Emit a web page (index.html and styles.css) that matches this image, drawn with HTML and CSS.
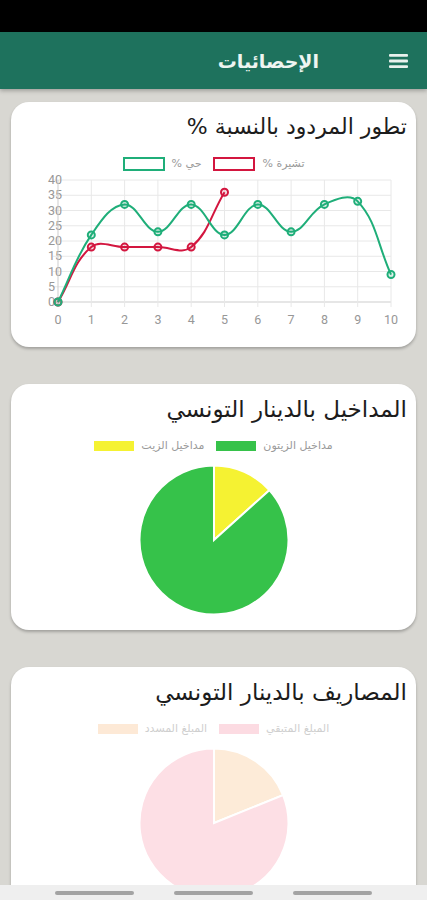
FILE: index.html
```html
<!DOCTYPE html>
<html lang="ar" dir="rtl">
<head>
  <meta charset="UTF-8" />
  <meta name="viewport" content="width=device-width, initial-scale=1.0"/>
  <title>الإحصائيات</title>
  <link rel="stylesheet" href="styles.css">
</head>
<body>
  <div class="app">
    <div class="status-bar"></div>
    <header class="app-bar">
      <button class="menu-btn" aria-label="menu">
        <svg width="19" height="14" viewBox="0 0 19 14">
          <rect x="0" y="0" width="19" height="2.8" rx="1"/>
          <rect x="0" y="5.6" width="19" height="2.8" rx="1"/>
          <rect x="0" y="11.2" width="19" height="2.8" rx="1"/>
        </svg>
      </button>
      <h1>الإحصائيات</h1>
    </header>

    <main class="content">
      <section class="card">
        <h2>تطور المردود بالنسبة %</h2>
        <div class="legend">
          <span class="legend-item"><i class="box box-line green"></i><span class="legend-label">حي %</span></span>
          <span class="legend-item"><i class="box box-line red"></i><span class="legend-label">تشيرة %</span></span>
        </div>
        <svg id="lineChart" class="line-chart" width="387" height="165" viewBox="0 0 387 165"></svg>
      </section>

      <section class="card">
        <h2>المداخيل بالدينار التونسي</h2>
        <div class="legend">
          <span class="legend-item"><i class="box yellow"></i><span class="legend-label">مداخيل الزيت</span></span>
          <span class="legend-item"><i class="box olive"></i><span class="legend-label">مداخيل الزيتون</span></span>
        </div>
        <svg class="pie" width="150" height="150" viewBox="0 0 150 150">
          <path d="M75 75 L75 0.5 A74.5 74.5 0 0 1 130.36 25.15 Z" fill="#f5f232" stroke="#fff" stroke-width="2"/>
          <path d="M75 75 L130.36 25.15 A74.5 74.5 0 1 1 75 0.5 Z" fill="#36c24a" stroke="#fff" stroke-width="2"/>
        </svg>
      </section>

      <section class="card">
        <h2>المصاريف بالدينار التونسي</h2>
        <div class="legend faded">
          <span class="legend-item"><i class="box peach"></i><span class="legend-label">المبلغ المسدد</span></span>
          <span class="legend-item"><i class="box pink"></i><span class="legend-label">المبلغ المتبقي</span></span>
        </div>
        <svg class="pie" width="150" height="150" viewBox="0 0 150 150">
          <path d="M75 75 L75 0.5 A74.5 74.5 0 0 1 144.07 47.09 Z" fill="#fdebd8" stroke="#fff" stroke-width="2"/>
          <path d="M75 75 L144.07 47.09 A74.5 74.5 0 1 1 75 0.5 Z" fill="#fddfe5" stroke="#fff" stroke-width="2"/>
        </svg>
      </section>
    </main>

    <div class="nav-bar">
      <span></span><span></span><span></span>
    </div>
  </div>

  <script src="script.js"></script>
</body>
</html>
```

FILE: styles.css
```css
* {
  box-sizing: border-box;
}

body {
  margin: 0;
  background: #d8d7d2;
  font-family: 'DejaVu Sans', sans-serif;
}

.app {
  height: 100vh;
  display: flex;
  flex-direction: column;
  overflow: hidden;
}

.status-bar {
  height: 32px;
  flex-shrink: 0;
  background: #000;
}

.app-bar {
  height: 57px;
  flex-shrink: 0;
  display: flex;
  align-items: center;
  padding-right: 19px;
  background: #1e725d;
  box-shadow: 0 2px 4px rgba(0, 0, 0, 0.25);
  position: relative;
  z-index: 1;
}

.menu-btn {
  display: flex;
  padding: 0;
  border: none;
  background: none;
  fill: #e9f1ed;
}

.app-bar h1 {
  margin: 0 70px 0 0;
  font-size: 19px;
  font-weight: bold;
  color: #eef5f1;
}

.content {
  flex: 1;
  overflow: hidden;
  display: flex;
  flex-direction: column;
  gap: 37px;
  padding: 13px 11px 0;
}

.card {
  flex-shrink: 0;
  padding: 8px 9px 11px;
  background: #fff;
  border-radius: 18px;
  box-shadow: 0 2px 3px rgba(0, 0, 0, 0.25);
}

.card h2 {
  margin: 0;
  font-size: 23px;
  font-weight: normal;
  line-height: 34px;
  color: #1c1c1c;
}

.card:first-child h2 {
  font-size: 22px;
}

.legend {
  direction: ltr;
  display: flex;
  justify-content: center;
  align-items: center;
  gap: 12px;
  margin-top: 15px;
  font-size: 11px;
  line-height: 10px;
  color: #9a9a9a;
}

.legend.faded {
  color: #cfcfcf;
}

.legend-item {
  display: flex;
  align-items: center;
  gap: 7px;
}

.legend-label {
  direction: rtl;
}

.box {
  display: block;
  width: 40px;
  height: 10px;
}

.box-line {
  width: 42px;
  height: 14px;
  border: 2px solid;
  background: #fff;
}

.box-line.green { border-color: #1fae79; }
.box-line.red { border-color: #d3163f; }
.yellow { background: #f5f232; }
.olive { background: #36c24a; }
.peach { background: #fde9d6; }
.pink { background: #fcdbe2; }

.card:first-child .legend {
  margin-top: 13px;
}

.line-chart {
  display: block;
}

.line-chart text {
  font-family: Roboto, sans-serif;
  font-size: 12.5px;
  fill: #979797;
}

.pie {
  display: block;
  margin: 14px auto 4px;
}

.nav-bar {
  position: fixed;
  left: 0;
  right: 0;
  bottom: 0;
  height: 15px;
  display: flex;
  justify-content: center;
  align-items: center;
  gap: 40px;
  background: #efefef;
}

.nav-bar span {
  width: 79px;
  height: 4px;
  border-radius: 2px;
  background: #a3a3a3;
}
```

FILE: script.js
```js
const svg = document.getElementById('lineChart');
const NS = 'http://www.w3.org/2000/svg';

const left = 38;
const stepX = 33.3;
const zeroY = 131;
const stepY = 3.05;
const maxY = 40;

const datasets = [
  { color: '#d3163f', fill: 'rgba(211, 22, 63, 0.15)', data: [0, 18, 18, 18, 18, 36] },
  { color: '#1fae79', fill: 'rgba(31, 174, 121, 0.15)', data: [0, 22, 32, 23, 32, 22, 32, 23, 32, 33, 9] }
];

function el(tag, attrs, text) {
  const node = document.createElementNS(NS, tag);
  for (const k in attrs) node.setAttribute(k, attrs[k]);
  if (text !== undefined) node.textContent = text;
  svg.appendChild(node);
  return node;
}

function px(i) { return left + i * stepX; }
function py(v) { return zeroY - v * stepY; }

// grid + y labels
for (let v = 0; v <= maxY; v += 5) {
  el('line', { x1: left - 5, x2: px(10), y1: py(v), y2: py(v), stroke: v === 0 ? '#cdcdcd' : '#e8e8e8', 'stroke-width': 1 });
  el('text', { x: left - 10, y: py(v) + 4, 'text-anchor': 'end' }, v);
}

// grid + x labels
for (let i = 0; i <= 10; i++) {
  el('line', { x1: px(i), x2: px(i), y1: py(maxY), y2: zeroY + 5, stroke: i === 0 ? '#cdcdcd' : '#e8e8e8', 'stroke-width': 1 });
  el('text', { x: px(i), y: 153, 'text-anchor': 'middle' }, i);
}

// same curve as chart.js (tension 0.4)
function spline(points, t) {
  return points.map((p, i) => {
    const prev = points[i - 1] || p;
    const next = points[i + 1] || p;
    const d01 = Math.hypot(p.x - prev.x, p.y - prev.y);
    const d12 = Math.hypot(next.x - p.x, next.y - p.y);
    const sum = d01 + d12 || 1;
    const fa = t * d01 / sum;
    const fb = t * d12 / sum;
    return {
      x: p.x, y: p.y,
      inX: p.x - fa * (next.x - prev.x), inY: p.y - fa * (next.y - prev.y),
      outX: p.x + fb * (next.x - prev.x), outY: p.y + fb * (next.y - prev.y)
    };
  });
}

datasets.forEach(set => {
  const pts = spline(set.data.map((v, i) => ({ x: px(i), y: py(v) })), 0.4);
  let d = `M${pts[0].x} ${pts[0].y}`;
  for (let i = 1; i < pts.length; i++) {
    const a = pts[i - 1], b = pts[i];
    d += ` C${a.outX.toFixed(2)} ${a.outY.toFixed(2)} ${b.inX.toFixed(2)} ${b.inY.toFixed(2)} ${b.x.toFixed(2)} ${b.y.toFixed(2)}`;
  }
  el('path', { d: d, fill: 'none', stroke: set.color, 'stroke-width': 2 });
  pts.forEach(p => {
    el('circle', { cx: p.x, cy: p.y, r: 3.5, fill: set.fill, stroke: set.color, 'stroke-width': 2 });
  });
});
```
